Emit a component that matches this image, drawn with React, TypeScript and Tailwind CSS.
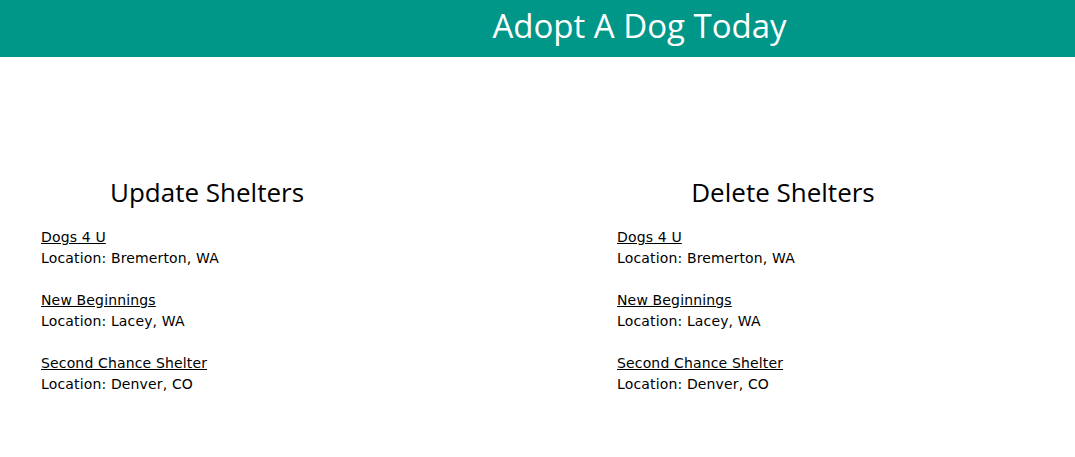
import React from 'react';

interface Shelter {
    name: string;
    location: string;
}

const shelters: Shelter[] = [
    { name: 'Dogs 4 U', location: 'Bremerton, WA' },
    { name: 'New Beginnings', location: 'Lacey, WA' },
    { name: 'Second Chance Shelter', location: 'Denver, CO' },
];

const ShelterList: React.FC<{ title: string }> = ({ title }) => {
    return (
        <div className="w-[332px]">
            <h2 className="text-center text-[26px] leading-[34px] text-black font-['Open_Sans',sans-serif]">
                {title}
            </h2>
            <ul className="mt-[18px] font-['DejaVu_Sans',Verdana,sans-serif] text-[14px] leading-[21px] tracking-[0.15px] text-black">
                {shelters.map((s) => (
                    <li key={s.name} className="mb-[21px]">
                        <a href="#" className="underline">{s.name}</a>
                        <div>Location: {s.location}</div>
                    </li>
                ))}
            </ul>
        </div>
    );
};

const App: React.FC = () => {
    return (
        <div className="min-h-screen bg-white">
            <header className="h-[57px] bg-[#009688] flex items-center justify-center pl-[204px] pb-[7px]">
                <h1 className="text-white text-[33px] font-['Open_Sans',sans-serif] leading-none">
                    Adopt A Dog Today
                </h1>
            </header>
            <main className="flex gap-[244px] pl-[41px] pt-[118px]">
                <ShelterList title="Update Shelters" />
                <ShelterList title="Delete Shelters" />
            </main>
        </div>
    );
};

export default App;
